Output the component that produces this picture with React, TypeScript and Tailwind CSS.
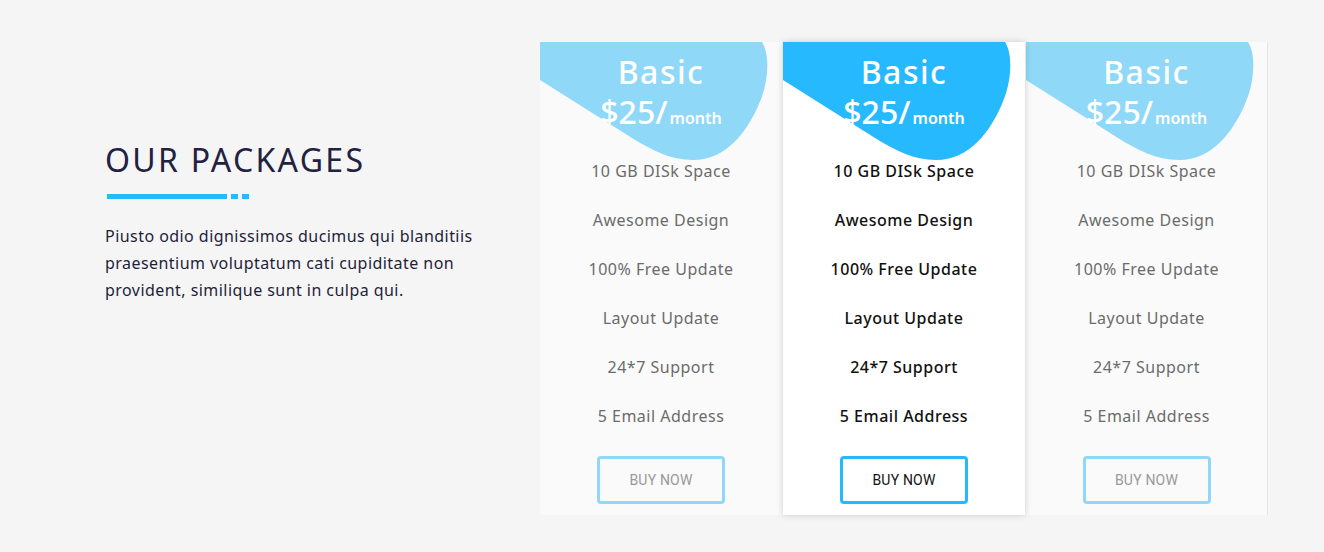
import React from "react";

const features = [
  "10 GB DISk Space",
  "Awesome Design",
  "100% Free Update",
  "Layout Update",
  "24*7 Support",
  "5 Email Address",
];

function Card({ featured, last }: { featured?: boolean; last?: boolean }) {
  const blob = featured ? "#27b9fd" : "#8fd8f8";
  return (
    <div
      className={
        "relative w-[242px] h-[473px] flex flex-col items-center " +
        (featured
          ? "bg-white shadow-[0_0_7px_rgba(0,0,0,0.16)] z-10"
          : "bg-[#fafafa]") +
        (last ? " border-r border-[#e4e4e4]" : "")
      }
    >
      <svg
        className="absolute left-0 top-0"
        width="242"
        height="130"
        viewBox="0 0 242 130"
      >
        <path
          d="M0 0 H222 C230 12 229 40 219 62 C207 90 186 118 153 118 C130 118 112 108 92 96 L0 38 Z"
          fill={blob}
        />
      </svg>
      <div className="relative flex flex-col items-center pt-[10px] text-white font-['Noto_Sans',sans-serif] font-medium">
        <div className="h-[40px] leading-[40px] text-[32px] tracking-[1.5px]">Basic</div>
        <div className="h-[40px] leading-[40px] flex items-baseline">
          <span className="text-[32px]">$25/</span>
          <span className="text-[16px] ml-[2px] font-semibold">month</span>
        </div>
      </div>
      <ul className="relative mt-[14px] flex flex-col items-center">
        {features.map((f) => (
          <li
            key={f}
            className={
              "h-[49px] flex items-center text-[16px] tracking-[0.5px] font-['Noto_Sans',sans-serif] " +
              (featured ? "text-[#111] font-medium" : "text-[#6b6b6b]")
            }
          >
            {f}
          </li>
        ))}
      </ul>
      <button
        className={
          "mt-[16px] w-[128px] h-[48px] rounded-[4px] border-[3px] text-[14px] tracking-[0.2px] font-['Roboto',sans-serif] " +
          (featured
            ? "border-[#27b9fd] text-[#111]"
            : "border-[#8fd8f8] text-[#999]")
        }
      >
        BUY NOW
      </button>
    </div>
  );
}

export default function App() {
  return (
    <div className="w-[1324px] h-[552px] bg-[#f5f5f5] flex pt-[42px]">
      <div className="w-[540px] pl-[105px] pt-[99px]">
        <h2 className="text-[32px] leading-[38px] text-[#222140] font-['Noto_Sans',sans-serif] tracking-[2.3px]">
          OUR PACKAGES
        </h2>
        <div className="flex items-center gap-[4px] mt-[15px] ml-[2px]">
          <div className="w-[120px] h-[5px] bg-[#27b9fd]" />
          <div className="w-[7px] h-[5px] bg-[#27b9fd]" />
          <div className="w-[7px] h-[5px] bg-[#27b9fd]" />
        </div>
        <p className="mt-[24px] text-[16px] leading-[27px] tracking-[0.45px] text-[#1f1e3a] font-['Noto_Sans',sans-serif] w-[400px]">
          Piusto odio dignissimos ducimus qui blanditiis
          <br />
          praesentium voluptatum cati cupiditate non
          <br />
          provident, similique sunt in culpa qui.
        </p>
      </div>
      <div className="flex h-[473px] gap-[1px]">
        <Card />
        <Card featured />
        <Card last />
      </div>
    </div>
  );
}
